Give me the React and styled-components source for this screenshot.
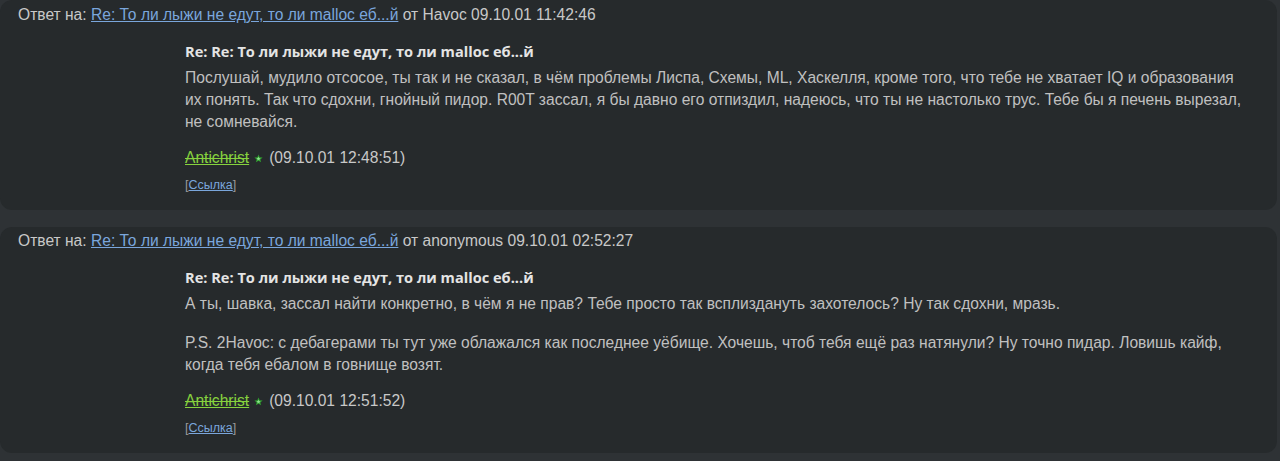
import React from "react";
import styled, { createGlobalStyle } from "styled-components";

const Global = createGlobalStyle`
  html, body {
    margin: 0;
    padding: 0;
    background: #2e3235;
  }
  body {
    font-family: "Liberation Sans", Arial, sans-serif;
    font-size: 15.6px;
    color: #c4c4c4;
  }
`;

const Page = styled.div`
  display: flex;
  flex-direction: column;
  gap: 17px;
  padding: 0 3px 0 0;
`;

const Card = styled.article`
  background: #262a2c;
  border-radius: 12px;
  padding: ${(p) => (p.first ? "6px" : "5px")} 24px 17px 18px;
`;

const Header = styled.div`
  line-height: 17px;
  color: #c8c8c8;
`;

const TopicLink = styled.a`
  color: #7aa6dc;
  text-decoration: underline;
  cursor: pointer;
`;

const Body = styled.div`
  margin-left: 167px;
`;

const Title = styled.h2`
  margin: 18px 0 6px 0;
  font-family: "Open Sans", "Noto Sans", sans-serif;
  font-weight: 700;
  font-size: 14.6px;
  line-height: 20px;
  color: #e4e4e4;
`;

const Para = styled.p`
  margin: 0;
  line-height: 22px;
  color: #c0c0c0;
  & + & {
    margin-top: 17px;
  }
`;

const Sign = styled.div`
  margin-top: 14px;
  line-height: 22px;
  display: flex;
  align-items: center;
  color: #c8c8c8;
`;

const User = styled.a`
  color: #86d23e;
  text-decoration: underline line-through;
  cursor: pointer;
`;

const Star = styled.svg`
  width: 9px;
  height: 9px;
  margin: 1px 6px 0 5px;
`;

const Ref = styled.div`
  margin-top: 8px;
  font-size: 12.5px;
  line-height: 16px;
  color: #9a9a9a;
  a {
    color: #7aa6dc;
    text-decoration: underline;
  }
`;

const posts = [
  {
    author: "Havoc",
    date: "09.10.01 11:42:46",
    paras: [
      "Послушай, мудило отсосое, ты так и не сказал, в чём проблемы Лиспа, Схемы, ML, Хаскелля, кроме того, что тебе не хватает IQ и образования их понять. Так что сдохни, гнойный пидор. R00T зассал, я бы давно его отпиздил, надеюсь, что ты не настолько трус. Тебе бы я печень вырезал, не сомневайся.",
    ],
    time: "09.10.01 12:48:51",
  },
  {
    author: "anonymous",
    date: "09.10.01 02:52:27",
    paras: [
      "А ты, шавка, зассал найти конкретно, в чём я не прав? Тебе просто так всплиздануть захотелось? Ну так сдохни, мразь.",
      "P.S. 2Havoc: с дебагерами ты тут уже облажался как последнее уёбище. Хочешь, чтоб тебя ещё раз натянули? Ну точно пидар. Ловишь кайф, когда тебя ебалом в говнище возят.",
    ],
    time: "09.10.01 12:51:52",
  },
];

const StarIcon = () => (
  <Star viewBox="0 0 10 10">
    <polygon
      points="5,0.5 6.3,3.6 9.6,3.8 7.1,6 7.9,9.3 5,7.5 2.1,9.3 2.9,6 0.4,3.8 3.7,3.6"
      fill="#2f9e2f"
    />
    <polygon points="5,3 5.7,4.5 7.3,4.6 6,5.6 6.4,7.2 5,6.3 3.6,7.2 4,5.6 2.7,4.6 4.3,4.5" fill="#8fe08f" />
  </Star>
);

const Post = ({ post, first }) => (
  <Card first={first}>
    <Header>
      Ответ на: <TopicLink>Re: То ли лыжи не едут, то ли malloc еб...й</TopicLink> от {post.author} {post.date}
    </Header>
    <Body>
      <Title>Re: Re: То ли лыжи не едут, то ли malloc еб...й</Title>
      {post.paras.map((t, i) => (
        <Para key={i}>{t}</Para>
      ))}
      <Sign>
        <User>Antichrist</User>
        <StarIcon />
        ({post.time})
      </Sign>
      <Ref>
        [<a>Ссылка</a>]
      </Ref>
    </Body>
  </Card>
);

export default function App() {
  return (
    <>
      <Global />
      <Page>
        {posts.map((p, i) => (
          <Post key={i} post={p} first={i === 0} />
        ))}
      </Page>
    </>
  );
}
